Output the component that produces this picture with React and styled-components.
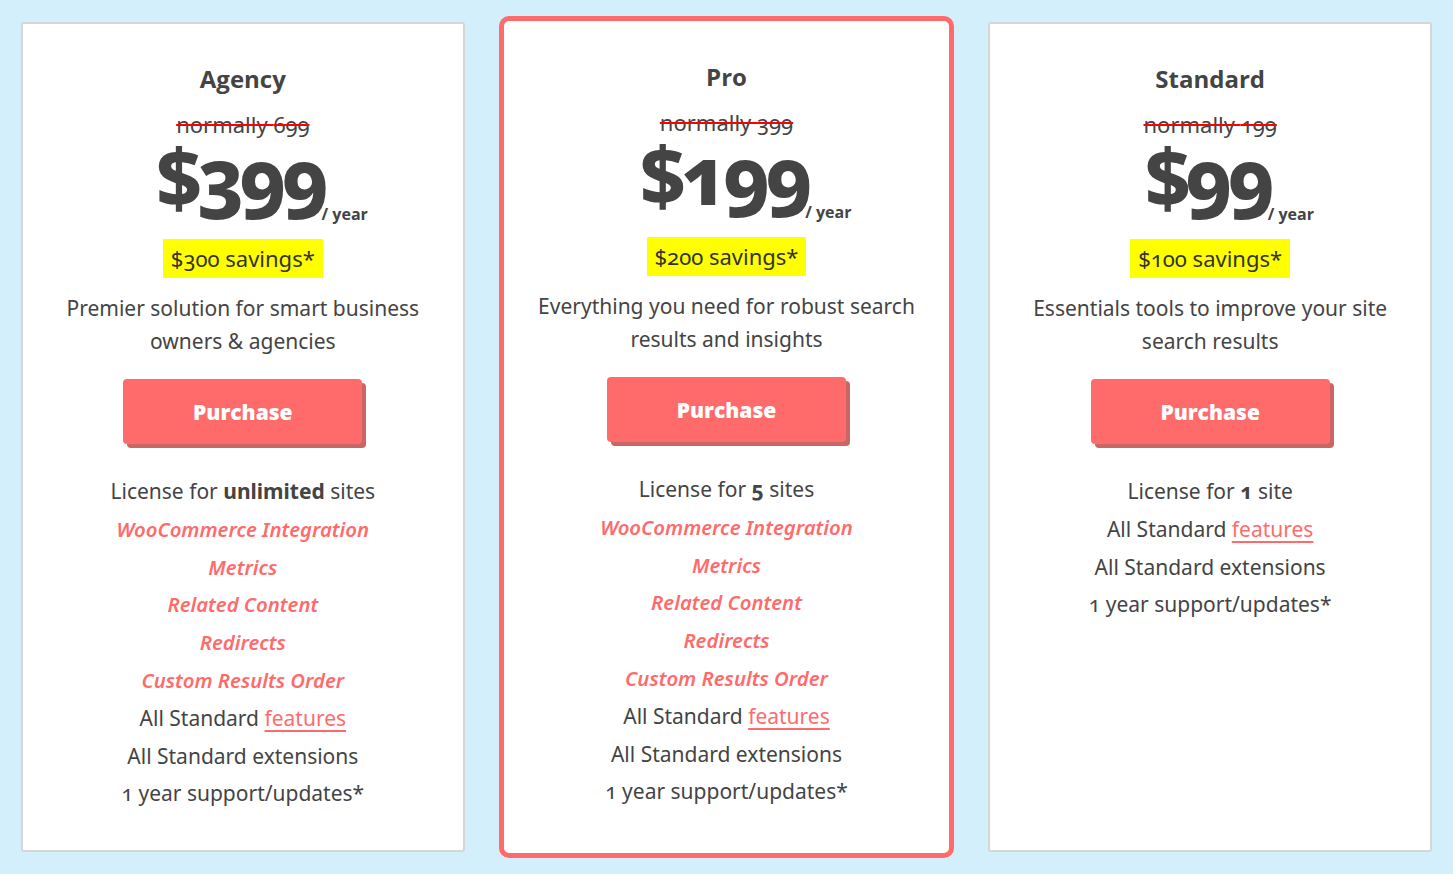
import React from 'react';
import styled, { createGlobalStyle } from 'styled-components';

const GlobalStyle = createGlobalStyle`
  html, body {
    margin: 0;
    padding: 0;
    background: #d3effc;
  }
  body {
    font-family: "Noto Sans", "Open Sans", sans-serif;
    color: #444;
  }
`;

const Page = styled.div`
  display: grid;
  grid-template-columns: repeat(3, 1fr);
  gap: 28px;
  padding: 16px 15px;
  min-height: 100vh;
  box-sizing: border-box;
  background: #d3effc;
`;

const Card = styled.div`
  display: flex;
  flex-direction: column;
  align-items: center;
  text-align: center;
  background: #fff;
  box-sizing: border-box;
  padding-top: ${p => (p.featured ? 40 : 39)}px;
  margin: ${p => (p.featured ? 0 : 6)}px;
  border: ${p => (p.featured ? '5px solid #ff6b6b' : '2px solid #d6d6d6')};
  border-radius: ${p => (p.featured ? 10 : 3)}px;
`;

const Title = styled.h2`
  margin: 0;
  font-family: "Open Sans", sans-serif;
  font-size: 24px;
  line-height: 32px;
  font-weight: 700;
  color: #444;
`;

const Normally = styled.div`
  margin-top: 14px;
  font-size: 22px;
  line-height: 30px;
  color: #444;
  font-variant-numeric: oldstyle-nums;
  text-decoration: line-through;
  text-decoration-color: #f00;
  text-decoration-thickness: 2px;
`;

const PriceRow = styled.div`
  position: relative;
  height: 74px;
`;

const Price = styled.span`
  display: block;
  font-size: 80px;
  line-height: 74px;
  font-weight: 800;
  letter-spacing: -5px;
  padding-right: 5px;
  color: #444;
  font-variant-numeric: oldstyle-nums;
`;

const Per = styled.span`
  position: absolute;
  left: calc(100% - 8px);
  bottom: -9px;
  white-space: nowrap;
  font-family: "Open Sans", sans-serif;
  font-size: 16px;
  line-height: 16px;
  font-weight: 700;
  color: #444;
`;

const Savings = styled.div`
  margin-top: 26px;
  background: #ffff00;
  padding: 0 8px;
  font-size: 22px;
  line-height: 39px;
  color: #333;
  font-variant-numeric: oldstyle-nums;
`;

const Desc = styled.p`
  margin: 14px 0 0;
  max-width: 380px;
  font-size: 21px;
  line-height: 33px;
  color: #444;
`;

const Button = styled.button`
  margin-top: 21px;
  width: 239px;
  height: 65px;
  border: 0;
  border-radius: 4px;
  background: #ff6b6b;
  box-shadow: 4px 4px 0 #c96666;
  color: #fff;
  font-family: "Open Sans", sans-serif;
  font-size: 21px;
  font-weight: 800;
  cursor: pointer;
`;

const Features = styled.ul`
  list-style: none;
  margin: 29px 0 0;
  padding: 0;
`;

const Feature = styled.li`
  font-size: ${p => (p.highlight ? 20.3 : 21)}px;
  line-height: 37.8px;
  color: ${p => (p.highlight ? '#ff6b6b' : '#444')};
  font-style: ${p => (p.highlight ? 'italic' : 'normal')};
  font-weight: ${p => (p.highlight ? 600 : 400)};
  font-variant-numeric: oldstyle-nums;

  b {
    font-weight: 700;
  }
`;

const Link = styled.a`
  color: #ff6b6b;
  text-decoration: underline;
  text-underline-offset: 4px;
`;

const addons = ['WooCommerce Integration', 'Metrics', 'Related Content', 'Redirects', 'Custom Results Order'];

const plans = [
  {
    name: 'Agency',
    normally: 699,
    price: 399,
    savings: 300,
    desc: 'Premier solution for smart business owners & agencies',
    sites: <><b>unlimited</b> sites</>,
    addons: true,
  },
  {
    name: 'Pro',
    normally: 399,
    price: 199,
    savings: 200,
    desc: 'Everything you need for robust search results and insights',
    sites: <><b>5</b> sites</>,
    addons: true,
    featured: true,
  },
  {
    name: 'Standard',
    normally: 199,
    price: 99,
    savings: 100,
    desc: 'Essentials tools to improve your site search results',
    sites: <><b>1</b> site</>,
    addons: false,
  },
];

export default function App() {
  return (
    <>
      <GlobalStyle />
      <Page>
        {plans.map(plan => (
          <Card key={plan.name} featured={plan.featured}>
            <Title>{plan.name}</Title>
            <Normally>normally {plan.normally}</Normally>
            <PriceRow>
              <Price>${plan.price}</Price>
              <Per>/ year</Per>
            </PriceRow>
            <Savings>${plan.savings} savings*</Savings>
            <Desc>{plan.desc}</Desc>
            <Button>Purchase</Button>
            <Features>
              <Feature>License for {plan.sites}</Feature>
              {plan.addons && addons.map(a => <Feature key={a} highlight>{a}</Feature>)}
              <Feature>All Standard <Link href="#">features</Link></Feature>
              <Feature>All Standard extensions</Feature>
              <Feature>1 year support/updates*</Feature>
            </Features>
          </Card>
        ))}
      </Page>
    </>
  );
}
